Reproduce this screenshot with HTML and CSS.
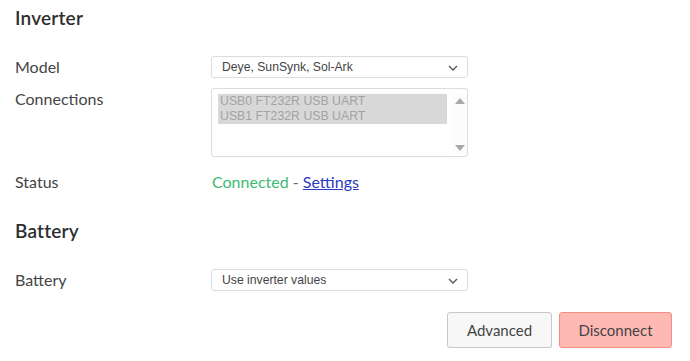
FILE: index.html
```html
<!DOCTYPE html>
<html lang="en">
<head>
    <meta charset="UTF-8">
    <meta name="viewport" content="width=device-width, initial-scale=1.0">
    <title>Inverter settings</title>
    <link rel="stylesheet" href="styles.css">
</head>
<body>
    <div class="panel">
        <h2 class="section-title">Inverter</h2>

        <div class="form-row">
            <label class="form-label">Model</label>
            <div class="select-box">
                <span>Deye, SunSynk, Sol-Ark</span>
                <svg class="chevron" width="10" height="6" viewBox="0 0 10 6"><path d="M1 1l4 4 4-4" fill="none" stroke="#555" stroke-width="1.3"/></svg>
            </div>
        </div>

        <div class="form-row form-row-top">
            <label class="form-label">Connections</label>
            <div class="listbox">
                <div class="listbox-options">
                    <div class="listbox-option">USB0 FT232R USB UART</div>
                    <div class="listbox-option">USB1 FT232R USB UART</div>
                </div>
                <div class="listbox-scroll">
                    <svg width="10" height="7" viewBox="0 0 10 7"><path d="M0 7L5 1l5 6z" fill="#a8a8a8"/></svg>
                    <svg width="10" height="7" viewBox="0 0 10 7"><path d="M0 0l5 6 5-6z" fill="#a8a8a8"/></svg>
                </div>
            </div>
        </div>

        <div class="form-row form-row-status">
            <label class="form-label">Status</label>
            <div class="status-text">
                <span class="status-ok">Connected</span> - <a href="#" class="status-link">Settings</a>
            </div>
        </div>

        <h2 class="section-title section-gap">Battery</h2>

        <div class="form-row">
            <label class="form-label">Battery</label>
            <div class="select-box">
                <span>Use inverter values</span>
                <svg class="chevron" width="10" height="6" viewBox="0 0 10 6"><path d="M1 1l4 4 4-4" fill="none" stroke="#555" stroke-width="1.3"/></svg>
            </div>
        </div>

        <div class="actions">
            <button class="btn btn-light">Advanced</button>
            <button class="btn btn-danger">Disconnect</button>
        </div>
    </div>
</body>
</html>
```

FILE: styles.css
```css
* {
    margin: 0;
    padding: 0;
    box-sizing: border-box;
}

body {
    background-color: #fff;
    color: #444;
    font-family: 'Lato', 'Noto Sans', sans-serif;
    font-size: 16px;
}

.panel {
    width: 690px;
    padding: 6px 18px 0 15px;
}

.section-title {
    font-size: 19px;
    font-weight: 600;
    line-height: 24px;
    color: #2e2e2e;
    letter-spacing: 0.2px;
    margin-bottom: 26px;
}

.section-gap {
    margin-top: 26px;
}

.form-row {
    display: grid;
    grid-template-columns: 196px 257px;
    align-items: center;
    margin-bottom: 10px;
}

.form-row-top {
    align-items: start;
    margin-bottom: 14px;
}

.form-row-status {
    margin-bottom: 0;
}

.form-label {
    line-height: 22px;
    color: #444;
}

.select-box {
    height: 22px;
    border: 1px solid #dcdcdc;
    border-radius: 3px;
    display: flex;
    align-items: center;
    justify-content: space-between;
    padding: 0 9px 0 10px;
    font-family: 'Liberation Sans', Arial, sans-serif;
    font-size: 12.2px;
    color: #444;
}

.chevron {
    margin-top: 1px;
}

.listbox {
    height: 69px;
    border: 1px solid #dcdcdc;
    border-radius: 3px;
    display: flex;
    padding: 5px 0 2px 6px;
}

.listbox-options {
    flex: 1;
    font-family: 'Liberation Sans', Arial, sans-serif;
    font-size: 12.3px;
    color: #a3a3a3;
}

.listbox-option {
    background-color: #d8d8d8;
    line-height: 15px;
    padding-left: 2px;
    margin-right: 5px;
}

.listbox-scroll {
    width: 15px;
    display: flex;
    flex-direction: column;
    justify-content: space-between;
    align-items: center;
    padding: 3px 0 2px;
    background-color: #fcfcfc;
}

.status-text {
    line-height: 22px;
    color: #666;
    padding-left: 1px;
}

.status-ok {
    color: #3dba72;
}

.status-link {
    color: #2a3bc0;
}

.actions {
    display: flex;
    justify-content: flex-end;
    gap: 7px;
    margin-top: 21px;
}

.btn {
    height: 36px;
    font-family: 'Lato', 'Noto Sans', sans-serif;
    font-size: 15px;
    color: #444;
    border-radius: 3px;
    cursor: pointer;
}

.btn-light {
    width: 105px;
    background-color: #f7f7f7;
    border: 1px solid #c8c8c8;
    box-shadow: 0 1px 1px rgba(0, 0, 0, 0.08);
}

.btn-danger {
    width: 113px;
    background-color: #ffb9b4;
    border: 1px solid #f28d84;
}
```
